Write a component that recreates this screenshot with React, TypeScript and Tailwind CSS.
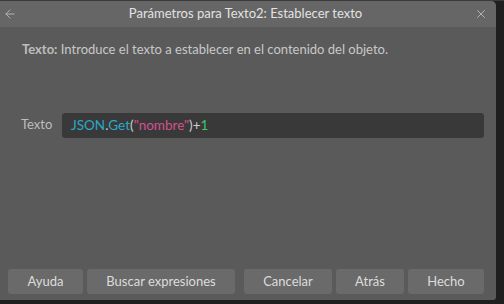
import { ArrowLeft, X } from 'lucide-react'

const font = { fontFamily: 'Lato, "Open Sans", sans-serif' }

function Btn({ label, w }: { label: string; w: string }) {
  return (
    <button className={`h-[25px] rounded-[3px] bg-[#6a6a6a] text-[13px] text-[#dcdcdc] ${w}`}>
      {label}
    </button>
  )
}

export default function App() {
  return (
    <div className="h-[304px] w-[504px] overflow-hidden bg-[#1f1f1f]" style={font}>
      <div className="h-[1px] bg-[#3a3a3a]" />
      <div className="flex h-[299px] w-[496px] flex-col overflow-hidden rounded-tr-[5px] rounded-br-[3px] bg-[#5a5a5a]">
        {/* Titulo */}
        <div className="flex h-[26px] items-center bg-[#666666] px-[3px] text-[#d8d8d8]">
          <ArrowLeft size={14} strokeWidth={1.5} className="text-[#bdbdbd]" />
          <div className="flex-1 text-center text-[13px] text-[#e2e2e2]">Parámetros para Texto2: Establecer texto</div>
          <X size={14} strokeWidth={1.5} className="mr-[5px] text-[#bdbdbd]" />
        </div>

        <div className="px-[22px] pt-[13px] text-[13px] text-[#c8c8c8]">
          <span className="font-bold text-[#bdbdbd]">Texto:</span> Introduce el texto a establecer en el contenido del objeto.
        </div>

        <div className="mt-[53px] flex items-center pl-[21px] pr-[12px]">
          <span className="w-[41px] text-[13px] text-[#bdbdbd]">Texto</span>
          <div className="flex h-[25px] flex-1 items-center rounded-[3px] bg-[#393939] pl-[9px] text-[13.5px]">
            <span className="text-[#2aa9c9]">JSON</span>
            <span className="text-[#cfcfcf]">.</span>
            <span className="text-[#2aa9c9]">Get</span>
            <span className="text-[#cfcfcf]">(</span>
            <span className="text-[#d4508f]">"nombre"</span>
            <span className="text-[#cfcfcf]">)+</span>
            <span className="text-[#3ec26f]">1</span>
          </div>
        </div>

        <div className="mt-auto flex items-center justify-between pb-[6px] pl-[8px] pr-[12px]">
          <div className="flex gap-[4px]">
            <Btn label="Ayuda" w="w-[75px]" />
            <Btn label="Buscar expresiones" w="w-[148px]" />
          </div>
          <div className="flex gap-[4px]">
            <Btn label="Cancelar" w="w-[88px]" />
            <Btn label="Atrás" w="w-[68px]" />
            <Btn label="Hecho" w="w-[76px]" />
          </div>
        </div>
      </div>
    </div>
  )
}
